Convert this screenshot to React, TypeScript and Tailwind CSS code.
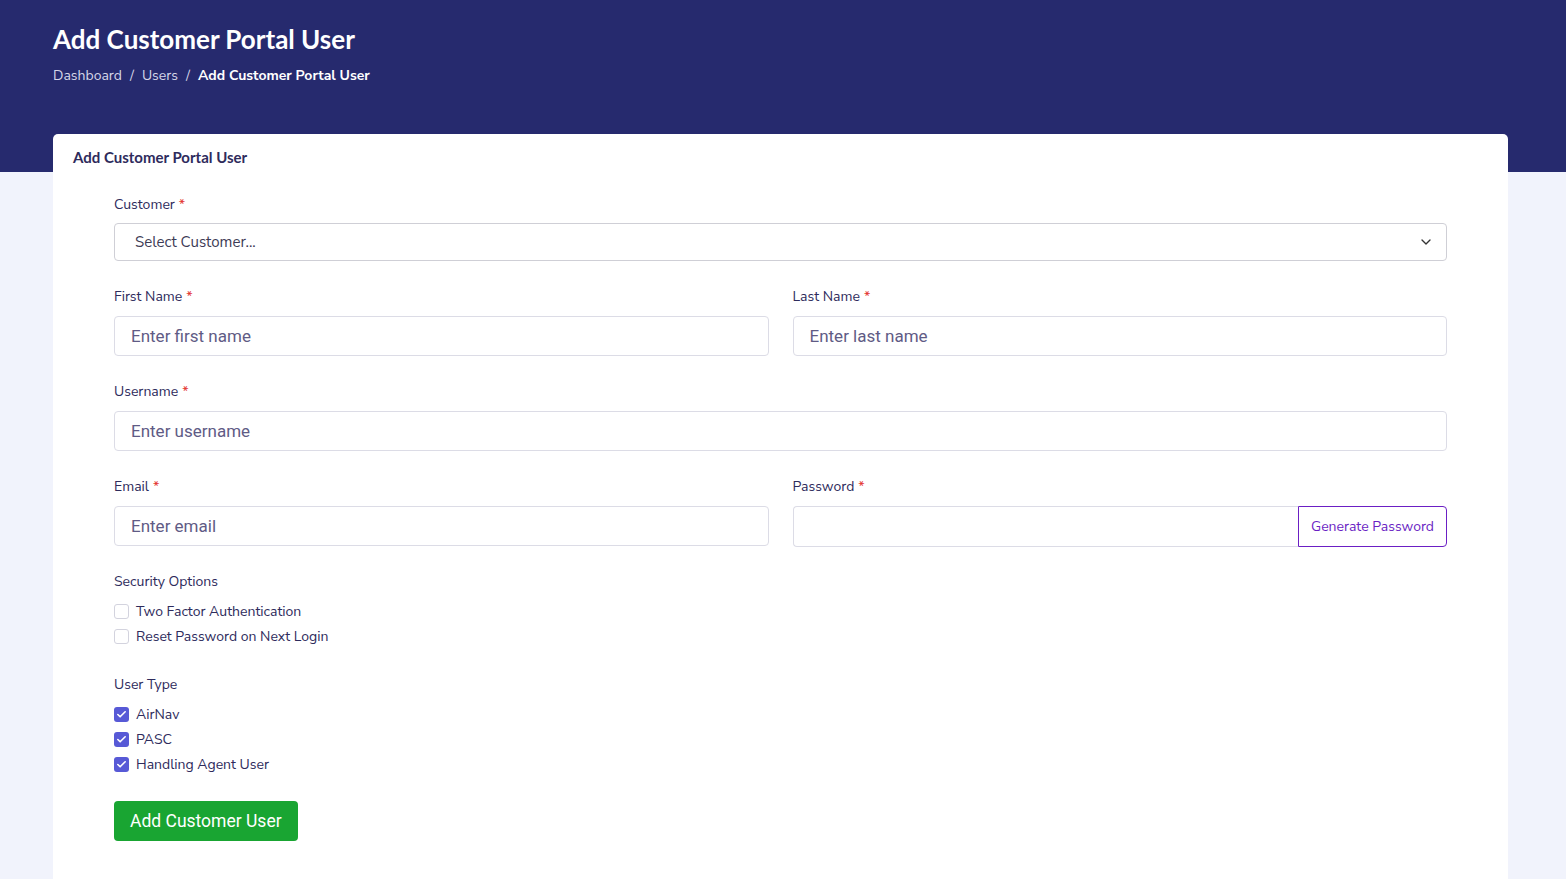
import { ChevronDown, Check } from "lucide-react";

const body = { fontFamily: "'Nunito Sans', Lato, 'Open Sans', sans-serif" };
const heading = { fontFamily: "Lato, 'Open Sans', sans-serif" };

function Label({ text, required }: { text: string; required?: boolean }) {
    return (
        <label className="block text-[14px] leading-[20px] text-[#2e2b5c] mb-[9px]">
            {text}
            {required && <span className="text-[#e3342f] ml-[4px]">*</span>}
        </label>
    );
}

function TextInput({ placeholder }: { placeholder: string }) {
    return (
        <input
            placeholder={placeholder}
            className="w-full h-[40px] px-[16px] border border-[#dcdce6] rounded-[4px] bg-white text-[17px] text-[#2e2b5c] placeholder:text-[#5f5b85] outline-none"
            style={{ fontFamily: "Roboto, 'Open Sans', sans-serif" }}
        />
    );
}

function CheckRow({ text, checked }: { text: string; checked?: boolean }) {
    return (
        <div className="flex items-center gap-[7px] h-[25px]">
            {checked ? (
                <span className="w-[15px] h-[15px] rounded-[3px] bg-[#5759d6] flex items-center justify-center">
                    <Check size={11} strokeWidth={3.5} className="text-white" />
                </span>
            ) : (
                <span className="w-[15px] h-[15px] rounded-[3px] border border-[#d3d3de] bg-white" />
            )}
            <span className="text-[14px] leading-[20px] text-[#2e2b5c]">{text}</span>
        </div>
    );
}

export default function App() {
    const userTypes = ["AirNav", "PASC", "Handling Agent User"];

    return (
        <div className="min-h-[879px] bg-[#f1f3fc]" style={body}>
            {/* Header band */}
            <div className="bg-[#262a6e] h-[172px] px-[53px] pt-[22px]">
                <h1 className="text-white text-[26px] font-bold leading-[34px]" style={heading}>
                    Add Customer Portal User
                </h1>
                <div className="flex items-center gap-[8px] mt-[10px] text-[14px] leading-[20px] text-[#d5d6e8]">
                    <span>Dashboard</span>
                    <span>/</span>
                    <span>Users</span>
                    <span>/</span>
                    <span className="text-white font-bold">Add Customer Portal User</span>
                </div>
            </div>

            {/* Card */}
            <div className="ml-[53px] mr-[58px] -mt-[38px] bg-white rounded-t-[5px] pb-[60px]">
                <div className="px-[20px] pt-[13px] text-[15px] leading-[20px] font-bold text-[#2e2b5c]" style={heading}>
                    Add Customer Portal User
                </div>

                <div className="px-[61px] pt-[28px]">
                    {/* Customer */}
                    <div>
                        <Label text="Customer" required />
                        <div className="-mt-[1px] h-[38px] border border-[#cfcfd6] rounded-[4px] flex items-center justify-between pl-[20px] pr-[12px]">
                            <span className="text-[15px] text-[#3d3b55]">Select Customer...</span>
                            <ChevronDown size={16} strokeWidth={2} className="text-[#333]" />
                        </div>
                    </div>

                    {/* Names */}
                    <div className="grid grid-cols-2 gap-[24px] mt-[26px]">
                        <div>
                            <Label text="First Name" required />
                            <TextInput placeholder="Enter first name" />
                        </div>
                        <div>
                            <Label text="Last Name" required />
                            <TextInput placeholder="Enter last name" />
                        </div>
                    </div>

                    {/* Username */}
                    <div className="mt-[26px]">
                        <Label text="Username" required />
                        <TextInput placeholder="Enter username" />
                    </div>

                    {/* Email / password */}
                    <div className="grid grid-cols-2 gap-[24px] mt-[26px]">
                        <div>
                            <Label text="Email" required />
                            <TextInput placeholder="Enter email" />
                        </div>
                        <div>
                            <Label text="Password" required />
                            <div className="flex h-[41px]">
                                <input className="flex-1 min-w-0 border border-[#dcdce6] border-r-0 rounded-l-[4px] outline-none" />
                                <button className="w-[149px] border border-[#6b1fc4] rounded-r-[4px] text-[14px] text-[#6b1fc4]">
                                    Generate Password
                                </button>
                            </div>
                        </div>
                    </div>

                    {/* Security */}
                    <div className="mt-[25px]">
                        <div className="text-[14px] text-[#2e2b5c] leading-[20px] mb-[7px]">Security Options</div>
                        <CheckRow text="Two Factor Authentication" />
                        <CheckRow text="Reset Password on Next Login" />
                    </div>

                    {/* User type */}
                    <div className="mt-[26px]">
                        <div className="text-[14px] text-[#2e2b5c] leading-[20px] mb-[7px]">User Type</div>
                        {userTypes.map((t) => (
                            <CheckRow key={t} text={t} checked />
                        ))}
                    </div>

                    <button
                        className="mt-[24px] h-[40px] px-[16px] bg-[#19a532] rounded-[4px] text-white text-[17.5px]"
                        style={{ fontFamily: "Roboto, sans-serif" }}
                    >
                        Add Customer User
                    </button>
                </div>
            </div>
        </div>
    );
}
